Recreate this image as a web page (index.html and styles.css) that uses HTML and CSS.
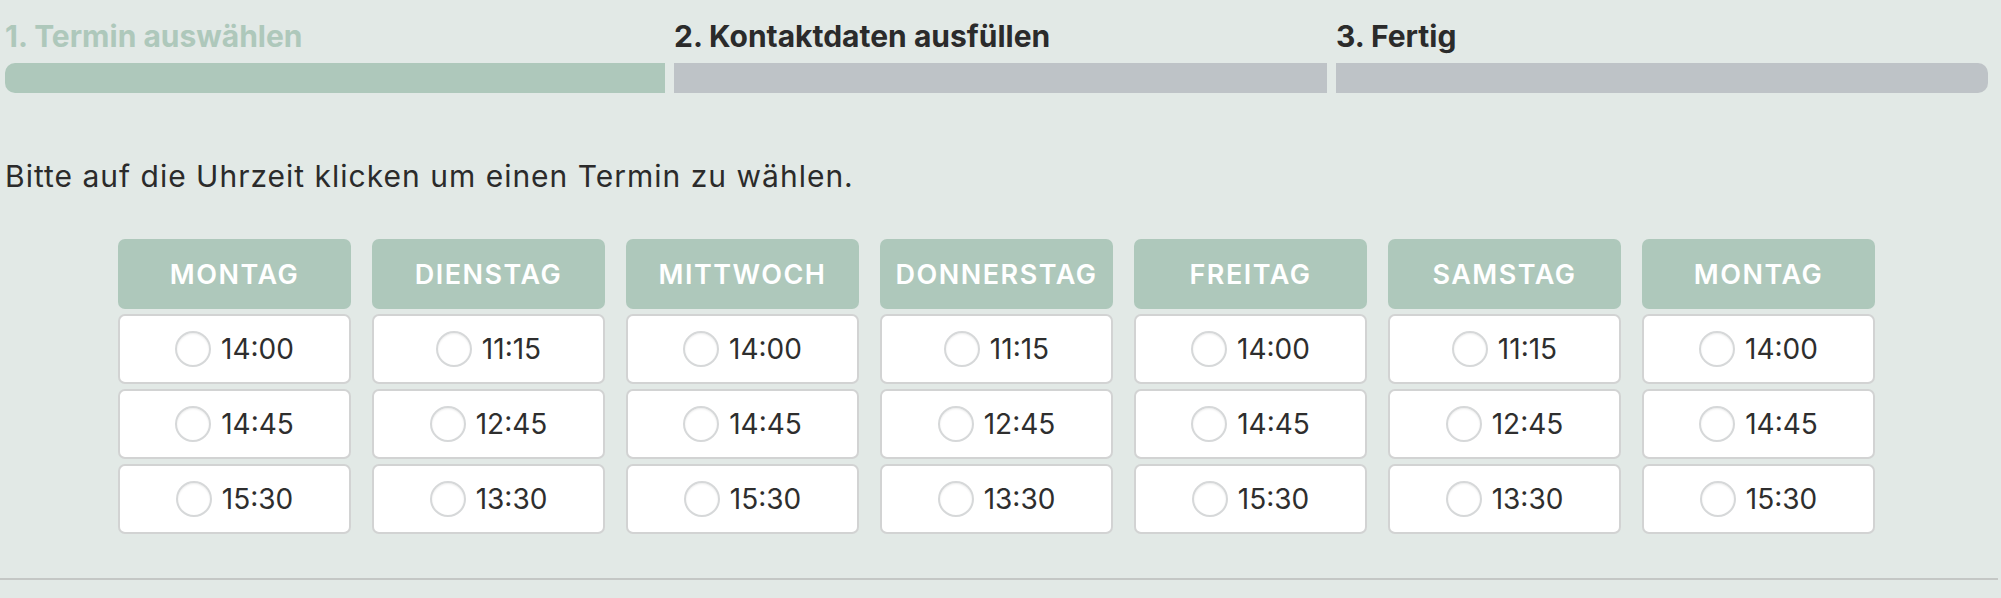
FILE: index.html
```html
<!DOCTYPE html>
<html>
  <head>
    <link rel="stylesheet" href="styles.css">
  </head>
  <body>
    <div class="booking">
      <div class="steps">
        <div class="step active">
          <div class="step-label">1. Termin auswählen</div>
          <div class="step-bar"></div>
        </div>
        <div class="step">
          <div class="step-label">2. Kontaktdaten ausfüllen</div>
          <div class="step-bar"></div>
        </div>
        <div class="step">
          <div class="step-label">3. Fertig</div>
          <div class="step-bar"></div>
        </div>
      </div>

      <p class="hint">Bitte auf die Uhrzeit klicken um einen Termin zu wählen.</p>

      <div class="days">
        <div class="day">
          <div class="day-name">Montag</div>
          <label class="slot"><span class="radio"></span>14:00</label>
          <label class="slot"><span class="radio"></span>14:45</label>
          <label class="slot"><span class="radio"></span>15:30</label>
        </div>
        <div class="day">
          <div class="day-name">Dienstag</div>
          <label class="slot"><span class="radio"></span>11:15</label>
          <label class="slot"><span class="radio"></span>12:45</label>
          <label class="slot"><span class="radio"></span>13:30</label>
        </div>
        <div class="day">
          <div class="day-name">Mittwoch</div>
          <label class="slot"><span class="radio"></span>14:00</label>
          <label class="slot"><span class="radio"></span>14:45</label>
          <label class="slot"><span class="radio"></span>15:30</label>
        </div>
        <div class="day">
          <div class="day-name">Donnerstag</div>
          <label class="slot"><span class="radio"></span>11:15</label>
          <label class="slot"><span class="radio"></span>12:45</label>
          <label class="slot"><span class="radio"></span>13:30</label>
        </div>
        <div class="day">
          <div class="day-name">Freitag</div>
          <label class="slot"><span class="radio"></span>14:00</label>
          <label class="slot"><span class="radio"></span>14:45</label>
          <label class="slot"><span class="radio"></span>15:30</label>
        </div>
        <div class="day">
          <div class="day-name">Samstag</div>
          <label class="slot"><span class="radio"></span>11:15</label>
          <label class="slot"><span class="radio"></span>12:45</label>
          <label class="slot"><span class="radio"></span>13:30</label>
        </div>
        <div class="day">
          <div class="day-name">Montag</div>
          <label class="slot"><span class="radio"></span>14:00</label>
          <label class="slot"><span class="radio"></span>14:45</label>
          <label class="slot"><span class="radio"></span>15:30</label>
        </div>
      </div>
    </div>
    <hr class="divider">
  </body>
</html>
```

FILE: styles.css
```css
body {
  margin: 0;
  background: #e2e9e6;
  font-family: Inter, "Open Sans", sans-serif;
  color: #2b2b2b;
}
.booking {
  width: 1983px;
  padding: 18px 0 0 5px;
}
.steps {
  display: grid;
  grid-template-columns: 660px 653px 1fr;
  gap: 9px;
}
.step-label {
  font-size: 30px;
  font-weight: 700;
  line-height: 36px;
  color: #2b2b2b;
  margin-bottom: 9px;
}
.step-bar {
  height: 30px;
  background: #bec3c7;
}
.step.active .step-label {
  color: #aec8bb;
}
.step.active .step-bar {
  background: #aec8bb;
}
.step:first-child .step-bar {
  border-radius: 10px 0 0 10px;
}
.step:last-child .step-bar {
  border-radius: 0 10px 10px 0;
}
.hint {
  margin: 65px 0 0;
  font-size: 30px;
  line-height: 36px;
  letter-spacing: 1px;
}
.days {
  display: grid;
  grid-template-columns: repeat(7, 233px);
  justify-content: center;
  gap: 21px;
  margin-top: 45px;
}
.day {
  display: flex;
  flex-direction: column;
  gap: 5px;
}
.day-name {
  height: 70px;
  display: flex;
  align-items: center;
  justify-content: center;
  background: #aec8bb;
  border-radius: 7px;
  color: #fff;
  font-size: 27px;
  font-weight: 600;
  letter-spacing: 1.5px;
  text-transform: uppercase;
}
.slot {
  height: 70px;
  box-sizing: border-box;
  display: flex;
  align-items: center;
  justify-content: center;
  gap: 10px;
  background: #fff;
  border: 2px solid #d2d3d3;
  border-radius: 7px;
  font-size: 28px;
  color: #2e2e2e;
}
.radio {
  width: 36px;
  height: 36px;
  box-sizing: border-box;
  border-radius: 50%;
  border: 2px solid #d6d8d9;
  box-shadow: inset 0 1px 2px rgba(0, 0, 0, 0.08);
  background: #fff;
}
.divider {
  margin: 44px 0 0;
  width: 1998px;
  border: none;
  height: 2px;
  background: #c4c7c5;
}
```
